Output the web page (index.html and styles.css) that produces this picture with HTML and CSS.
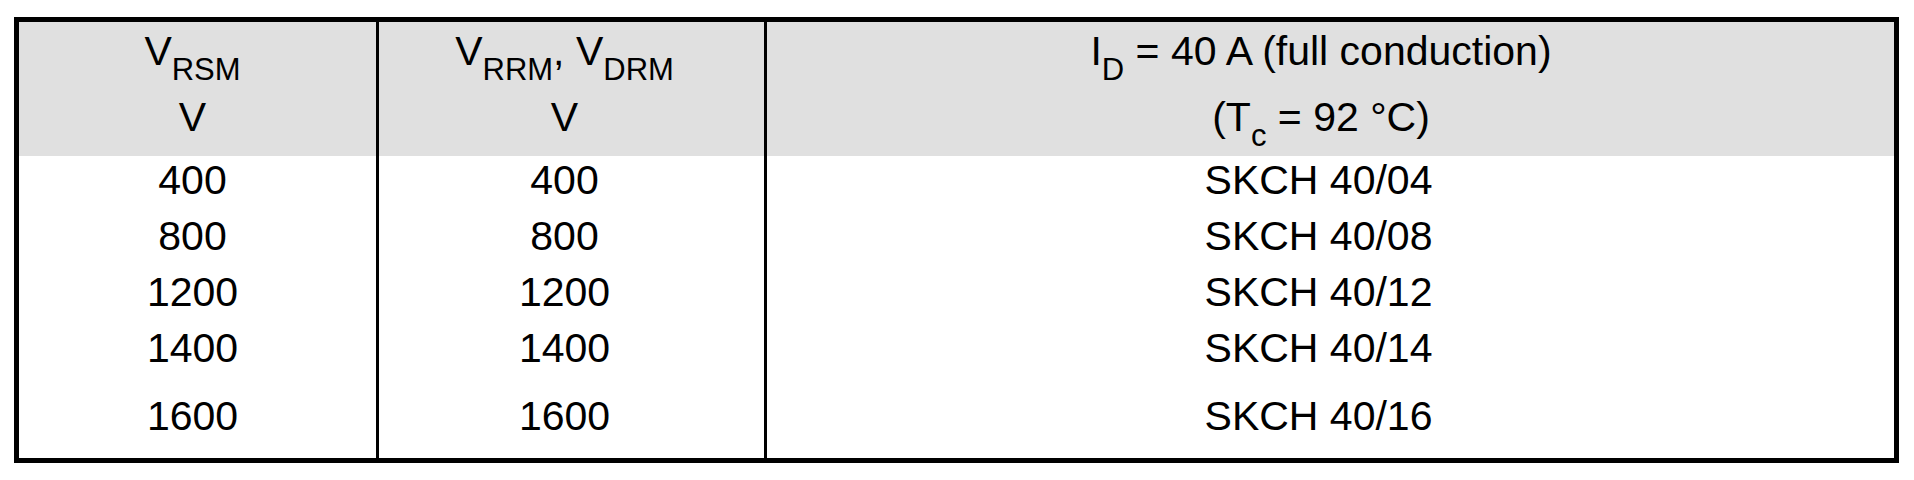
FILE: index.html
```html
<!DOCTYPE html>
<html>
<head>
<meta charset="utf-8">
<link rel="stylesheet" href="styles.css">
</head>
<body>
<div class="spec">
  <div class="cell head c1"><div class="l1">V<sub>RSM</sub></div><div class="l2">V</div></div>
  <div class="cell head c2"><div class="l1">V<sub>RRM</sub>, V<sub>DRM</sub></div><div class="l2">V</div></div>
  <div class="cell head c3"><div class="l1">I<sub>D</sub> = 40 A (full conduction)</div><div class="l2">(T<sub>c</sub> = 92 °C)</div></div>

  <div class="cell c1">400</div><div class="cell c2">400</div><div class="cell c3">SKCH 40/04</div>
  <div class="cell c1">800</div><div class="cell c2">800</div><div class="cell c3">SKCH 40/08</div>
  <div class="cell c1">1200</div><div class="cell c2">1200</div><div class="cell c3">SKCH 40/12</div>
  <div class="cell c1">1400</div><div class="cell c2">1400</div><div class="cell c3">SKCH 40/14</div>
  <div class="cell c1 last">1600</div><div class="cell c2 last">1600</div><div class="cell c3 last">SKCH 40/16</div>
</div>
</body>
</html>
```
FILE: styles.css
```css
html, body {
  margin: 0;
  padding: 0;
  background: #ffffff;
}
body {
  padding: 17px 0 0 14px;
  font-family: "Liberation Sans", Arial, sans-serif;
  color: #000;
}
.spec {
  box-sizing: border-box;
  width: 1885px;
  border: 5px solid #000;
  display: grid;
  grid-template-columns: 360px 388px 1127px;
  font-size: 41px;
  line-height: 44px;
}
.cell {
  box-sizing: border-box;
  text-align: center;
  padding: 2px 14px 10px 0;
}
.c1, .c2 {
  border-right: 3px solid #000;
}
.c1 {
  padding-right: 10px;
}
.c3 {
  padding-right: 24px;
}
.cell.last {
  padding-top: 14px;
  padding-bottom: 20px;
}
.cell.head {
  background: #e0e0e0;
  padding-top: 7px;
  padding-bottom: 17px;
}
.head.c3 {
  padding-right: 19px;
}
.l1, .l2 {
  white-space: nowrap;
}
.l2 {
  margin-top: 22px;
}
sub {
  font-size: 31px;
  line-height: 0;
  vertical-align: -15px;
}
```
